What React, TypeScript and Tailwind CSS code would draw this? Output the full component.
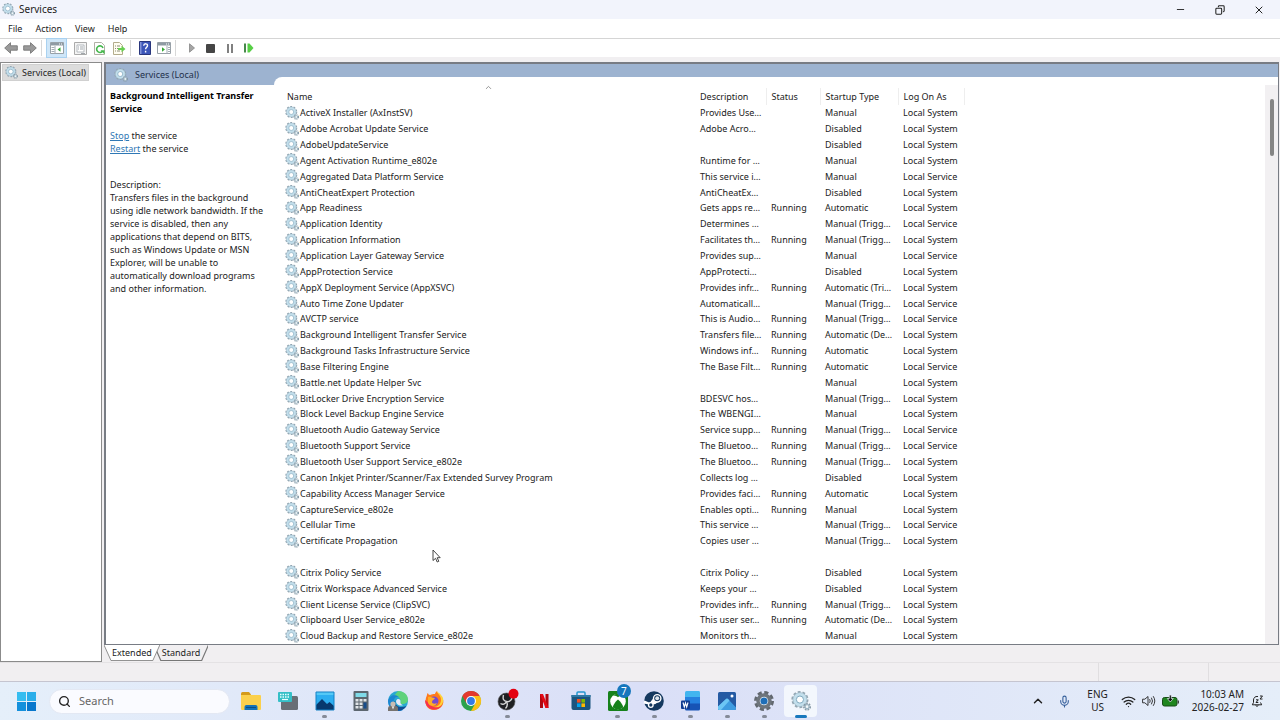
import type { ReactNode } from "react";
import { ChevronUp, Copy, Mic, Minus, Search, Wifi, X } from "lucide-react";

type Service = {
  name: string;
  description?: string;
  status?: string;
  startup?: string;
  logOn?: string;
};

const SYSTEM = "Local System";
const SERVICE = "Local Service";

const services: Service[] = [
  { name: "ActiveX Installer (AxInstSV)", description: "Provides Use…", startup: "Manual", logOn: SYSTEM },
  { name: "Adobe Acrobat Update Service", description: "Adobe Acro…", startup: "Disabled", logOn: SYSTEM },
  { name: "AdobeUpdateService", startup: "Disabled", logOn: SYSTEM },
  { name: "Agent Activation Runtime_e802e", description: "Runtime for …", startup: "Manual", logOn: SYSTEM },
  { name: "Aggregated Data Platform Service", description: "This service i…", startup: "Manual", logOn: SERVICE },
  { name: "AntiCheatExpert Protection", description: "AntiCheatEx…", startup: "Disabled", logOn: SYSTEM },
  { name: "App Readiness", description: "Gets apps re…", status: "Running", startup: "Automatic", logOn: SYSTEM },
  { name: "Application Identity", description: "Determines …", startup: "Manual (Trigg…", logOn: SERVICE },
  { name: "Application Information", description: "Facilitates th…", status: "Running", startup: "Manual (Trigg…", logOn: SYSTEM },
  { name: "Application Layer Gateway Service", description: "Provides sup…", startup: "Manual", logOn: SERVICE },
  { name: "AppProtection Service", description: "AppProtecti…", startup: "Disabled", logOn: SYSTEM },
  { name: "AppX Deployment Service (AppXSVC)", description: "Provides infr…", status: "Running", startup: "Automatic (Tri…", logOn: SYSTEM },
  { name: "Auto Time Zone Updater", description: "Automaticall…", startup: "Manual (Trigg…", logOn: SERVICE },
  { name: "AVCTP service", description: "This is Audio…", status: "Running", startup: "Manual (Trigg…", logOn: SERVICE },
  { name: "Background Intelligent Transfer Service", description: "Transfers file…", status: "Running", startup: "Automatic (De…", logOn: SYSTEM },
  { name: "Background Tasks Infrastructure Service", description: "Windows inf…", status: "Running", startup: "Automatic", logOn: SYSTEM },
  { name: "Base Filtering Engine", description: "The Base Filt…", status: "Running", startup: "Automatic", logOn: SERVICE },
  { name: "Battle.net Update Helper Svc", startup: "Manual", logOn: SYSTEM },
  { name: "BitLocker Drive Encryption Service", description: "BDESVC hos…", startup: "Manual (Trigg…", logOn: SYSTEM },
  { name: "Block Level Backup Engine Service", description: "The WBENGI…", startup: "Manual", logOn: SYSTEM },
  { name: "Bluetooth Audio Gateway Service", description: "Service supp…", status: "Running", startup: "Manual (Trigg…", logOn: SERVICE },
  { name: "Bluetooth Support Service", description: "The Bluetoo…", status: "Running", startup: "Manual (Trigg…", logOn: SERVICE },
  { name: "Bluetooth User Support Service_e802e", description: "The Bluetoo…", status: "Running", startup: "Manual (Trigg…", logOn: SYSTEM },
  { name: "Canon Inkjet Printer/Scanner/Fax Extended Survey Program", description: "Collects log …", startup: "Disabled", logOn: SYSTEM },
  { name: "Capability Access Manager Service", description: "Provides faci…", status: "Running", startup: "Automatic", logOn: SYSTEM },
  { name: "CaptureService_e802e", description: "Enables opti…", status: "Running", startup: "Manual", logOn: SYSTEM },
  { name: "Cellular Time", description: "This service …", startup: "Manual (Trigg…", logOn: SERVICE },
  { name: "Certificate Propagation", description: "Copies user …", startup: "Manual (Trigg…", logOn: SYSTEM },
  { name: "" },
  { name: "Citrix Policy Service", description: "Citrix Policy …", startup: "Disabled", logOn: SYSTEM },
  { name: "Citrix Workspace Advanced Service", description: "Keeps your …", startup: "Disabled", logOn: SYSTEM },
  { name: "Client License Service (ClipSVC)", description: "Provides infr…", status: "Running", startup: "Manual (Trigg…", logOn: SYSTEM },
  { name: "Clipboard User Service_e802e", description: "This user ser…", status: "Running", startup: "Automatic (De…", logOn: SYSTEM },
  { name: "Cloud Backup and Restore Service_e802e", description: "Monitors th…", startup: "Manual", logOn: SYSTEM },
];

function GearsIcon({ className = "size-[14px]" }: { className?: string }) {
  return (
    <svg viewBox="0 0 28 28" className={`shrink-0 ${className}`} fill="none" aria-hidden="true">
      <circle cx="12.500" cy="12" r="10.500" stroke="#93a5b1" strokeWidth="3" strokeDasharray="3.800 2.800" />
      <circle cx="12.500" cy="12" r="7.500" stroke="#c3dfec" strokeWidth="5" />
      <circle cx="12.500" cy="12" r="9.800" stroke="#93aebd" strokeWidth="0.8" />
      <circle cx="12.500" cy="12" r="5" fill="#fff" stroke="#7ea9bf" strokeWidth="1.400" />
      <circle cx="22.500" cy="22" r="4.300" stroke="#8799a5" strokeWidth="2.600" strokeDasharray="2.200 1.500" />
      <circle cx="22.500" cy="22" r="2.800" fill="#f2f7f9" stroke="#9db5c2" strokeWidth="1.800" />
    </svg>
  );
}

function ToolButton({ label, active, children }: { label: string; active?: boolean; children: ReactNode }) {
  return (
    <button
      aria-label={label}
      className={`flex h-[18px] w-[19px] items-center justify-center ${
        active ? "bg-[#cfe6f8] outline outline-[#a9d1f0]" : ""
      }`}
    >
      {children}
    </button>
  );
}

function Arrow({ flip }: { flip?: boolean }) {
  return (
    <svg viewBox="0 0 14 12" className={`h-3 w-[14px] ${flip ? "-scale-x-100" : ""}`} aria-hidden="true">
      <path d="M.7 6 6.500.7v3.100h6.800v4.400H6.500v3.100z" fill="#9a9a9a" stroke="#777" strokeWidth=".9" />
    </svg>
  );
}

function PaneIcon({ right }: { right?: boolean }) {
  return (
    <svg viewBox="0 0 14 12" className="h-3 w-[14px]" aria-hidden="true">
      <path d="M.5.5h13v11H.5z" fill="#fff" stroke="#98a1a8" />
      <path d="M1 1h12v2.500H1z" fill="#8e9aa3" />
      <path d="M9 2h1m1 0h1" stroke="#fff" />
      <path d={right ? "M10 4v7.500M11 5.500h2M11 7.500h2M11 9.500h2" : "M5 4v7.500M1.500 5.500h3M1.500 7.500h3M1.500 9.500h3"} stroke="#a4adb4" />
      <path d={right ? "M5 5.300v4.400L8 7.500z" : "M10.500 5.300v4.400L7.500 7.500z"} fill="#35a935" />
    </svg>
  );
}

function Separator() {
  return <span className="mx-[2px] h-4 w-px bg-[#d8d8d8]" />;
}

function Toolbar() {
  return (
    <div className="flex h-[18px] shrink-0 items-center bg-white pl-px">
      <ToolButton label="Back"><Arrow /></ToolButton>
      <ToolButton label="Forward"><Arrow flip /></ToolButton>
      <Separator />
      <span className="w-[3px]" />
      <ToolButton label="Show/Hide Console Tree" active><PaneIcon /></ToolButton>
      <span className="w-[5px]" />
      <ToolButton label="Properties">
        <svg viewBox="0 0 13 13" className="size-[13px]" aria-hidden="true">
          <path d="M.5.5h12v12H.5z" fill="#f4f4f4" stroke="#aaa" />
          <path d="M3 3h7v7H3z" fill="#fff" stroke="#b5babf" />
          <path d="M4 5h1m1 0h3M4 7h1m1 0h3M7 11.500h4" stroke="#a1a7ac" />
        </svg>
      </ToolButton>
      <ToolButton label="Refresh">
        <svg viewBox="0 0 13 13" className="size-[13px]" fill="none" aria-hidden="true">
          <path d="M1.500.5h7l3 3v9h-10z" fill="#fff" stroke="#b1b1a6" />
          <path d="M9.500 9.200A3.300 3.300 0 1 1 10 6" stroke="#42b749" strokeWidth="1.600" />
          <path d="M7.500 8.300h4v4z" fill="#42b749" />
        </svg>
      </ToolButton>
      <ToolButton label="Export List">
        <svg viewBox="0 0 14 13" className="h-[13px] w-[14px]" fill="none" aria-hidden="true">
          <path d="M1.500.5h6l3 3v9h-9z" fill="#fffdf0" stroke="#b3ac8c" />
          <path d="M3 4h1m1 0h3M3 6.500h1m1 0h3M3 9h1m1 0h3" stroke="#8c8c76" />
          <path d="M6 6h3.500V3.800L13.500 7l-4 3.300V8H6z" fill="#67ce50" />
        </svg>
      </ToolButton>
      <Separator />
      <span className="w-[2px]" />
      <ToolButton label="Help">
        <svg viewBox="0 0 12 14" className="h-[14px] w-3" aria-hidden="true">
          <path d="M.5.5h11v13H.5z" fill="#3c55b8" stroke="#29367c" />
          <path d="M1 1h1.500v12H1z" fill="#8293d8" />
          <path d="M4.700 4.700c.2-2.600 4-2.400 3.800 0C8.400 6.300 6.600 6.500 6.600 8.300M6.600 9.800v1.600" stroke="#fff" strokeWidth="1.400" fill="none" />
        </svg>
      </ToolButton>
      <ToolButton label="Show/Hide Action Pane"><PaneIcon right /></ToolButton>
      <Separator />
      <span className="w-1" />
      <ToolButton label="Start Service">
        <svg viewBox="0 0 10 10" className="size-[10px]" aria-hidden="true">
          <path d="M2.500.8v8.400L7.500 5z" fill="#a5a5a5" stroke="#868686" strokeWidth=".8" />
        </svg>
      </ToolButton>
      <ToolButton label="Stop Service"><span className="size-[9px] rounded-[1px] bg-[#454545]" /></ToolButton>
      <ToolButton label="Pause Service">
        <span className="flex gap-[2px]">
          <span className="h-[9px] w-[2px] bg-[#808080]" />
          <span className="h-[9px] w-[2px] bg-[#808080]" />
        </span>
      </ToolButton>
      <ToolButton label="Restart Service">
        <svg viewBox="0 0 11 10" className="h-[10px] w-[11px]" aria-hidden="true">
          <path d="M1 .5h2v9H1z" fill="#47894b" />
          <path d="M4.500.5h2L10.500 5l-4 4.500h-2z" fill="#57cf46" />
        </svg>
      </ToolButton>
    </div>
  );
}

function DetailsPane() {
  return (
    <aside className="flex w-[168px] shrink-0 flex-col">
      <div className="flex h-[21px] shrink-0 items-center bg-[#9db3d0] pl-[8px]">
        <GearsIcon />
        <span className="ml-[7px] text-[#22304a]">Services (Local)</span>
      </div>
      <div className="pt-[4px] pr-2 pl-1 leading-[13px]">
        <h2 className="font-bold text-black">Background Intelligent Transfer Service</h2>
        <p className="mt-[14px]"><a href="#stop" className="text-[#2f78b5] underline">Stop</a> the service</p>
        <p><a href="#restart" className="text-[#2f78b5] underline">Restart</a> the service</p>
        <p className="mt-[23px]">Description:</p>
        <p>
          Transfers files in the background using idle network bandwidth. If the service is disabled, then any
          applications that depend on BITS, such as Windows Update or MSN Explorer, will be unable to
          automatically download programs and other information.
        </p>
      </div>
    </aside>
  );
}

function ServiceTable() {
  return (
    <table className="h-full w-full table-fixed border-collapse text-left leading-[15px] whitespace-nowrap">
      <colgroup>
        <col className="w-[420px]" />
        <col className="w-[72px]" />
        <col className="w-[54px]" />
        <col className="w-[78px]" />
        <col className="w-[66px]" />
        <col />
      </colgroup>
      <thead>
        <tr className="h-[17px]">
          <th className="p-0 pl-[13px] font-normal">Name</th>
          <th className="border-r border-[#eee] p-0 pl-[6px] font-normal">Description</th>
          <th className="border-r border-[#eee] p-0 pl-[5px] font-normal">Status</th>
          <th className="border-r border-[#eee] p-0 pl-[5px] font-normal">Startup Type</th>
          <th className="border-r border-[#eee] p-0 pl-[5px] font-normal">Log On As</th>
          <th className="p-0" />
        </tr>
      </thead>
      <tbody>
        {services.map((service, i) => (
          <tr key={i}>
            <td className="p-0 pl-[11px]">
              <div className="flex min-h-[15px] items-center gap-px">
                {service.name && <GearsIcon />}
                {service.name}
              </div>
            </td>
            <td className="p-0 pl-[6px]">{service.description}</td>
            <td className="p-0 pl-[5px]">{service.status}</td>
            <td className="p-0 pl-[5px]">{service.startup}</td>
            <td className="p-0 pl-[5px]">{service.logOn}</td>
            <td className="p-0" />
          </tr>
        ))}
      </tbody>
    </table>
  );
}

function ViewTab({ label, selected, last }: { label: string; selected?: boolean; last?: boolean }) {
  return (
    <button className={`relative h-4 px-2 ${selected ? "z-10" : "-ml-[6px]"}`}>
      <svg viewBox="0 0 56 16" preserveAspectRatio="none" className="absolute inset-0 size-full" aria-hidden="true">
        <path
          d="M0 0 7 15.500H49L56 0"
          fill={selected ? "#fff" : "#f1eff1"}
          stroke="#777"
          strokeWidth={last ? 1.2 : 0.8}
        />
      </svg>
      <span className="relative">{label}</span>
    </button>
  );
}

const taskbarApps: { name: string; running?: boolean; active?: boolean; icon: ReactNode }[] = [
  {
    name: "File Explorer",
    icon: (
      <>
        <path d="M0 2.500Q0 1 1.500 1H8l2 2.500V7H0z" fill="#d49a1a" />
        <path d="M0 4h19q1 0 1 1v13q0 1-1 1H1q-1 0-1-1z" fill="#fbd04c" />
        <path d="M3.500 19v-3q0-2 2-2h9q2 0 2 2v3z" fill="#1472b8" />
        <path d="M5 16.500h10" stroke="#0a4e87" />
      </>
    ),
  },
  {
    name: "On-Screen Keyboard",
    icon: (
      <>
        <rect x="3" y="5" width="17" height="14" rx="1.500" fill="#686e75" />
        <rect y="1" width="14" height="10" rx="1" fill="#35bfc7" />
        <path d="M2 3.500h10M2 6h10" stroke="#e6ffff" strokeWidth="1.300" strokeDasharray="1.500 1" />
        <path d="M4 8.500h6" stroke="#e6ffff" strokeWidth="1.200" />
      </>
    ),
  },
  {
    name: "Photo Viewer",
    running: true,
    icon: (
      <>
        <path d="M1 1h18v18H1z" fill="#2daef0" />
        <path d="M1 1h18v3H1z" fill="#55c9f6" />
        <path d="m1 14 6-6 5 5 2.500-2L19 15v4H1z" fill="#07396e" />
        <path d="M1 1h18v18H1z" fill="none" stroke="#1581c5" />
      </>
    ),
  },
  {
    name: "Calculator",
    icon: (
      <>
        <rect x="2.500" y="0" width="15" height="20" rx="1" fill="#5c666f" />
        <path d="M4.500 2h11v4h-11z" fill="#7fdae8" />
        <path d="M4.500 8h3v2.500h-3zm4 0h3v2.500h-3zm4 0h3v2.500h-3zm-8 3.500h3V14h-3zm4 0h3V14h-3zm-4 3.500h3v2.500h-3zm4 0h3v2.500h-3z" fill="#e0e4e8" />
        <path d="M12.500 11.500h3v6h-3z" fill="#174d8c" />
      </>
    ),
  },
  {
    name: "Microsoft Edge",
    icon: (
      <>
        <circle cx="10" cy="10" r="10" fill="#2aa9d2" />
        <path d="M10 0c6 0 10 4 10 8.500 0 3-3 5-6.500 4.500-2-.3-1-1.500-1-3C12.500 6 9 4.500 6 5z" fill="#5fd27c" />
        <path d="M0 10C1 4 8 3 11 6c-4-1-6 3-5 7 1 4 6 6 9 6.200C7 22 0 17 0 10z" fill="#1d86d2" />
        <path d="M7.500 9.500C6 14 11 18 18.500 15 16 19 12 20.500 8.500 19.500 4 17 5 11 7.500 9.500z" fill="#124c93" />
        <path d="M12.500 10c0-1.500-2-2.500-3.500-1.500-2 1.500-.5 4.500 1.500 5.500 1.500.8 3 .5 4.500.2-2-.7-3-1.700-2.500-4.200z" fill="#e3e9f9" />
        <path d="M0 20v-3q0-2 2.500-2.200h5Q10 15 10 17v3z" fill="#77736f" />
        <circle cx="5" cy="13" r="2.600" fill="#c9bdb3" />
        <path d="M3.800 15.500h2.400L5 18.500z" fill="#eee" />
      </>
    ),
  },
  {
    name: "Firefox",
    icon: (
      <>
        <path d="M3 4c0-1 .5-2 1-2 0 1 1 2 2 2 2-1 3-1 5-1 0-1 1-2 2-3 0 2 4 4 5.500 7 3 6-2 12-8.500 12S-1 13 3 4z" fill="#ff7a1c" />
        <path d="M13 0c0 3 4 4 4 9 0 4-3 7-7 7 8 2 12-7 7-12-1-2-3-2-4-4z" fill="#ffd43a" />
        <path d="M1 9c0 10 13 13 17 5-4 4-10 3-12-1z" fill="#f5324e" />
        <circle cx="10" cy="10" r="4.500" fill="#7849cd" />
        <path d="M4 6c3-1 4 1 7 1-1 2-3 2-3 4s3 2 5 1c-2 5-10 3-9-2z" fill="#ffad24" />
      </>
    ),
  },
  {
    name: "Google Chrome",
    icon: (
      <>
        <circle cx="10" cy="10" r="10" fill="#2ba24c" />
        <path d="M1.300 5A10 10 0 0 1 18.700 5H10L5.700 12.500z" fill="#e3382e" />
        <path d="M18.700 5A10 10 0 0 1 10 20l4.300-7.500L10 5z" fill="#fbc116" />
        <circle cx="10" cy="10" r="5" fill="#fff" />
        <circle cx="10" cy="10" r="3.900" fill="#347be6" />
      </>
    ),
  },
  {
    name: "OBS Studio",
    running: true,
    icon: (
      <>
        <circle cx="8.500" cy="10.500" r="8.500" fill="#1f2023" stroke="#555" strokeWidth=".6" />
        <path d="M5.500 4c-1 4 0 6 3 6.500s5-1.500 5.500-3.500M8.500 10.500c-1.500 3-3.500 3.500-6 2M8.500 10.500c1.500 3 1 5-1 7" fill="none" stroke="#d6d6d6" strokeWidth="1.400" />
        <circle cx="15.500" cy="2.800" r="5" fill="#e3000f" />
      </>
    ),
  },
  {
    name: "Netflix",
    icon: (
      <>
        <path d="M6 3h3v14H6zm5.500 0h3v14h-3z" fill="#b0060f" />
        <path d="M6 3h3l5.500 14h-3z" fill="#e50914" />
      </>
    ),
  },
  {
    name: "Microsoft Store",
    icon: (
      <>
        <path d="M6 5V2q0-1 1-1h6q1 0 1 1v3" fill="none" stroke="#2497d0" strokeWidth="1.500" />
        <path d="M.5 4h19v13q0 2-2 2h-15q-2 0-2-2z" fill="#1b557f" />
        <path d="M.5 4h19v2H.5z" fill="#2c79a6" />
        <path d="M6 8h3.600v3.600H6z" fill="#f25022" />
        <path d="M10.400 8H14v3.600h-3.600z" fill="#7fba00" />
        <path d="M6 12.400h3.600V16H6z" fill="#00a4ef" />
        <path d="M10.400 12.400H14V16h-3.600z" fill="#ffb900" />
      </>
    ),
  },
  {
    name: "Xbox",
    running: true,
    icon: (
      <>
        <rect width="20" height="20" rx="1.500" fill="#16811b" />
        <circle cx="10" cy="10.500" r="7.800" fill="#fff" />
        <path d="M5 4.600c1.500-.6 3.500.4 5 1.600 1.500-1.200 3.500-2.200 5-1.600-2-2.400-8-2.400-10 0z" fill="#16811b" />
        <path d="M10 8.500c-3 2.500-5.500 6.500-5 8 3 2.600 7 2.600 10 0 .5-1.500-2-5.500-5-8z" fill="#16811b" />
      </>
    ),
  },
  {
    name: "Steam",
    running: true,
    icon: (
      <>
        <circle cx="10" cy="10" r="9.800" fill="#15395f" />
        <path d="M.8 10.500 7 13.200l4-.8 4.500-3.200-3.500-4-3.500 4.300L6 13 .5 12z" fill="#fff" stroke="#fff" strokeWidth="1.500" />
        <circle cx="13.200" cy="7.300" r="3.700" fill="#15395f" stroke="#fff" strokeWidth="1.400" />
        <circle cx="13.200" cy="7.300" r="2" fill="#dfe6ee" />
        <circle cx="6.800" cy="14" r="2.300" fill="#15395f" stroke="#fff" strokeWidth="1.300" />
      </>
    ),
  },
  {
    name: "Word",
    running: true,
    icon: (
      <>
        <path d="M4 1.500Q4 0 5.500 0H18q1 0 1 1.500V7H4z" fill="#42b5ef" />
        <path d="M4 6h15v7H4z" fill="#2681df" />
        <path d="M4 12.500h15V18q0 1.500-1.500 1.500h-12Q4 19.500 4 18z" fill="#1753b5" />
        <rect y="9.500" width="9" height="8.500" rx="1" fill="#103b91" />
        <path d="m2 11.500 1.300 4.500 1.200-4 1.200 4L7 11.500" fill="none" stroke="#fff" strokeWidth="1.100" />
      </>
    ),
  },
  {
    name: "Photos",
    running: true,
    icon: (
      <>
        <rect x="1" y="1" width="18" height="18" rx="1.500" fill="#245aa3" />
        <path d="M1 15.500 9 8q1-1 2 0l8 8.500v1q0 1.500-1.500 1.500h-15Q1 19 1 17.500z" fill="#3f9ce0" />
        <path d="M1 15.500 9 8q1-1 2 0l1.500 1.500L4 19H2.500Q1 19 1 17.500z" fill="#6cc6f4" />
        <circle cx="15" cy="5" r="1.500" fill="#fff" />
      </>
    ),
  },
  {
    name: "Settings",
    running: true,
    icon: (
      <>
        <circle cx="10" cy="10" r="8.300" fill="none" stroke="#62686f" strokeWidth="3.400" strokeDasharray="4 2.520" />
        <circle cx="10" cy="10" r="6" fill="#fff" stroke="#6e757c" strokeWidth="3.500" />
        <circle cx="10" cy="10" r="3.600" fill="#1f6eb7" />
      </>
    ),
  },
  { name: "Services", running: true, active: true, icon: null },
];

function Taskbar() {
  return (
    <footer className="flex h-[39px] shrink-0 items-center border-t border-[#c5c5d0] bg-linear-to-r from-[#e5effa] via-[#dadff7] to-[#e5eef9]">
      <button aria-label="Start" className="ml-[17px] grid size-[19px] grid-cols-2 gap-px">
        <span className="bg-[#35bdf0]" />
        <span className="bg-[#2aaeea]" />
        <span className="bg-[#1490dc]" />
        <span className="bg-[#0877cc]" />
      </button>
      <label className="ml-[13px] flex h-[25px] w-[181px] items-center gap-2 rounded-full border border-[#e3e8f3] bg-[#fafbff] pl-2">
        <Search className="size-[13px] shrink-0 text-[#222]" strokeWidth={2.5} />
        <input
          aria-label="Search"
          placeholder="Search"
          className="w-full min-w-0 bg-transparent text-[11px] outline-none placeholder:text-[#666]"
        />
      </label>
      <nav className="ml-[3px] grid w-[586px] grid-cols-16">
        {taskbarApps.map((app) => (
          <button
            key={app.name}
            aria-label={app.name}
            className={`relative flex h-8 items-center justify-center ${app.active ? "mx-[2px] rounded bg-[#f3f7fd]" : ""}`}
          >
            {app.active ? (
              <GearsIcon className="size-5" />
            ) : (
              <svg viewBox="0 0 20 20" className="size-5 overflow-visible" aria-hidden="true">{app.icon}</svg>
            )}
            {app.name === "Xbox" && (
              <span className="absolute -top-px right-[5px] flex size-[14px] items-center justify-center rounded-full bg-[#1677bd] text-[10px] leading-none text-white">
                7
              </span>
            )}
            {app.running && (
              <span
                className={`absolute -bottom-px h-[3px] rounded-full ${app.active ? "w-3 bg-[#1878bd]" : "w-[5px] bg-[#858b98]"}`}
              />
            )}
          </button>
        ))}
      </nav>
      <div className="ml-auto flex items-center pr-4 text-[10px] leading-[13px] text-[#222]">
        <button aria-label="Show hidden icons"><ChevronUp className="size-[14px]" strokeWidth={2.5} /></button>
        <button aria-label="Microphone" className="ml-[13px]"><Mic className="size-[13px] text-[#355f9b]" /></button>
        <button className="ml-4 text-center">ENG<br />US</button>
        <button aria-label="Network, volume and battery" className="ml-[13px] flex items-center gap-[6px]">
          <Wifi className="size-[15px]" />
          <svg viewBox="0 0 14 12" className="h-3 w-[14px]" fill="none" stroke="#222" strokeWidth=".9" aria-hidden="true">
            <path d="M.6 4.200h2.200L6 1.500v9L2.800 7.800H.6z" strokeLinejoin="round" />
            <path d="M7.800 4.500q1 1.500 0 3M9.600 3q2 3 0 6M11.400 1.500q3 4.500 0 9" strokeLinecap="round" />
          </svg>
          <svg viewBox="0 0 17 12" className="h-3 w-[17px]" aria-hidden="true">
            <rect x=".5" y="2.500" width="14.500" height="8.500" rx="2" fill="#1f861f" stroke="#174d17" />
            <path d="M16.300 5.500v3" stroke="#333" strokeWidth="1.200" />
            <path d="M7.300 0h2v3.500h2L8.300 7l-3-3.500h2z" fill="#111" stroke="#eef3fb" strokeWidth=".7" />
          </svg>
        </button>
        <button className="ml-[13px] text-right">10:03 AM<br />2026-02-27</button>
        <button aria-label="Notifications" className="ml-[7px]">
          <svg viewBox="0 0 13 13" className="size-[13px]" fill="none" stroke="#222" aria-hidden="true">
            <path d="M7 1.500C4 1 2.500 3 2.500 5v2.500L1.300 9.800h9.400L9.500 7.500" strokeLinejoin="round" />
            <path d="M4.500 10.200q1.500 2.500 3 0M5 4.800h2.300L5 7.500h2.300M9 1h2.500L9 4h2.500" />
          </svg>
        </button>
      </div>
    </footer>
  );
}

export default function App() {
  return (
    <div className="relative flex h-screen flex-col overflow-hidden bg-[#f1eff1] font-['Noto_Sans','Open_Sans',sans-serif] text-[9px] text-[#222]">
      <header className="flex h-[19px] shrink-0 items-center bg-[#f2f4fc] pl-[2px]">
        <GearsIcon className="size-[13px]" />
        <h1 className="ml-1 text-[10px]">Services</h1>
        <div className="ml-auto flex">
          <button aria-label="Minimize" className="flex w-[39px] justify-center"><Minus className="size-[11px]" /></button>
          <button aria-label="Restore" className="flex w-[39px] items-center justify-center">
            <Copy className="size-[10px] -scale-x-100" strokeWidth={2.5} />
          </button>
          <button aria-label="Close" className="mr-[2px] flex w-[39px] justify-center"><X className="size-3" /></button>
        </div>
      </header>
      <nav className="flex h-5 shrink-0 items-center gap-[13px] border-b border-[#d5d5d5] bg-white pl-2">
        <button>File</button>
        <button>Action</button>
        <button>View</button>
        <button>Help</button>
      </nav>
      <Toolbar />

      <main className="mt-[5px] flex min-h-0 flex-1">
        <section className="mr-[2px] w-[102px] shrink-0 border border-[#8b8b8b] bg-white pt-[2px] pl-[2px]">
          <button className="flex h-[15px] items-center gap-1 bg-[#dcdcdc] px-[2px] outline outline-[#d0d0d0]">
            <GearsIcon className="size-[13px]" />
            Services (Local)
          </button>
        </section>

        <div className="flex min-w-0 flex-1 flex-col pr-px">
          <section className="flex min-h-0 flex-1 border-t-2 border-r border-b border-l-2 border-[#787c84] bg-white">
            <DetailsPane />
            <div className="flex min-w-0 flex-1 flex-col bg-[#9db3d0] pt-[13px]">
              <div className="relative flex min-h-0 flex-1 rounded-tl-[8px] bg-white pt-[11px]">
                <ChevronUp className="absolute top-[6px] left-[210px] size-[9px] text-[#777]" />
                <div className="min-w-0 flex-1">
                  <ServiceTable />
                </div>
                <div className="-mt-[3px] flex w-[13px] shrink-0 justify-center bg-[#f2f0f2] pt-[14px]">
                  <span className="h-[57px] w-1 rounded-full bg-[#858585]" />
                </div>
              </div>
            </div>
          </section>
          <div className="flex h-[17px] shrink-0">
            <ViewTab label="Extended" selected />
            <ViewTab label="Standard" last />
          </div>
        </div>
      </main>

      <div className="flex h-[19px] shrink-0 justify-end border-t border-[#e4e2e4]">
        <span className="w-[110px] border-l border-[#e0dee0]" />
        <span className="w-[72px] border-l border-[#e0dee0]" />
      </div>
      <Taskbar />

      <svg viewBox="0 0 9 14" className="absolute top-[549px] left-[432px] h-[14px] w-[9px]" aria-hidden="true">
        <path d="M1 1v10.500l2.600-2.200L5.200 13l1.600-.7L5.200 8.700h3z" fill="#fff" stroke="#333" strokeWidth=".9" />
      </svg>
    </div>
  );
}
